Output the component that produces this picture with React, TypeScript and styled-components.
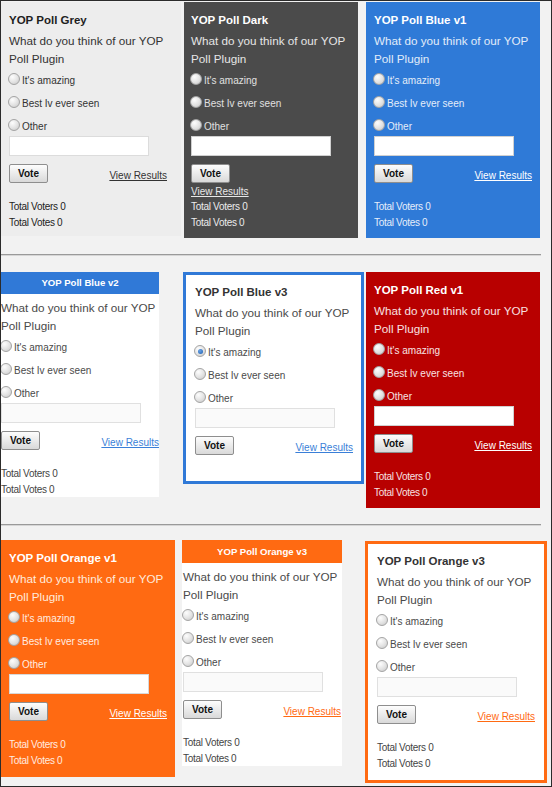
import styled, { createGlobalStyle } from 'styled-components';

const GlobalStyle = createGlobalStyle`
  html, body {
    margin: 0;
    padding: 0;
  }
  body {
    font-family: 'Liberation Sans', Arial, sans-serif;
    background: #f2f2f2;
  }
`;

type Skin = {
  bg: string;
  accent: string;
  title: string;
  text: string;
  label: string;
  link: string;
  totals: string;
  inputBg: string;
  inputBorder: string;
};

type Mode = 'inline' | 'header' | 'boxed';

type PollProps = {
  name: string;
  skin: Skin;
  mode: Mode;
  width: number;
  height: number;
  offset: number;
  top?: number;
  padX: number;
  headerHeight?: number;
  linkBelow?: boolean;
  showTotals?: boolean;
  checked?: number;
};

const options = ["It's amazing", 'Best Iv ever seen', 'Other'];

const grey: Skin = {
  bg: '#ededed',
  accent: '#ededed',
  title: '#1e1e1e',
  text: '#333',
  label: '#333',
  link: '#333',
  totals: '#222',
  inputBg: '#fff',
  inputBorder: '#dcdcdc',
};

const dark: Skin = {
  bg: '#4b4b4b',
  accent: '#4b4b4b',
  title: '#fff',
  text: '#e6e6e6',
  label: '#e0e0e0',
  link: '#e8e8e8',
  totals: '#ececec',
  inputBg: '#fff',
  inputBorder: '#cfcfcf',
};

const blue: Skin = {
  bg: '#2f7ad7',
  accent: '#2f7ad7',
  title: '#fff',
  text: '#e1ecf9',
  label: '#e4edf9',
  link: '#fff',
  totals: '#e6eefa',
  inputBg: '#fff',
  inputBorder: '#d0d0d0',
};

const red: Skin = {
  bg: '#b80000',
  accent: '#b80000',
  title: '#fff',
  text: '#f7e0e0',
  label: '#f7e3e3',
  link: '#fff',
  totals: '#f7e3e3',
  inputBg: '#fff',
  inputBorder: '#d0d0d0',
};

const orange: Skin = {
  bg: '#ff6a12',
  accent: '#ff6a12',
  title: '#fff',
  text: '#ffeadc',
  label: '#ffece0',
  link: '#fff',
  totals: '#ffece0',
  inputBg: '#fff',
  inputBorder: '#d8d8d8',
};

const lightBlue: Skin = {
  bg: '#fff',
  accent: '#3079d7',
  title: '#333',
  text: '#4a4a4a',
  label: '#4a4a4a',
  link: '#3a7fd8',
  totals: '#444',
  inputBg: '#fafafa',
  inputBorder: '#e0e0e0',
};

const lightOrange: Skin = {
  ...lightBlue,
  accent: '#ff6a12',
  link: '#ff6a12',
};

export default function App() {
  return (
    <>
      <GlobalStyle />
      <Frame>
        <Row $height={253} $padTop={1}>
          <Poll name="YOP Poll Grey" skin={grey} mode="inline" width={180} height={234} offset={0} padX={8} />
          <Poll name="YOP Poll Dark" skin={dark} mode="inline" width={174} height={236} offset={3} padX={7} linkBelow />
          <Poll name="YOP Poll Blue v1" skin={blue} mode="inline" width={174} height={236} offset={8} padX={8} />
        </Row>
        <Separator />
        <Row $height={268} $padTop={16}>
          <Poll name="YOP Poll Blue v2" skin={lightBlue} mode="header" width={158} height={225} offset={0} padX={0} headerHeight={22} />
          <Poll name="YOP Poll Blue v3" skin={lightBlue} mode="boxed" width={181} height={212} offset={24} padX={9} showTotals={false} checked={0} />
          <Poll name="YOP Poll Red v1" skin={red} mode="inline" width={174} height={236} offset={2} padX={8} />
        </Row>
        <Separator />
        <Row $height={259} $padTop={14}>
          <Poll name="YOP Poll Orange v1" skin={orange} mode="inline" width={174} height={237} offset={0} padX={8} />
          <Poll name="YOP Poll Orange v3" skin={lightOrange} mode="header" width={160} height={226} offset={7} padX={1} headerHeight={23} />
          <Poll name="YOP Poll Orange v3" skin={lightOrange} mode="boxed" width={182} height={242} offset={23} top={1} padX={9} />
        </Row>
      </Frame>
    </>
  );
}

function Poll({
  name,
  skin,
  mode,
  width,
  height,
  offset,
  top = 0,
  padX,
  headerHeight = 22,
  linkBelow = false,
  showTotals = true,
  checked,
}: PollProps) {
  return (
    <Panel
      $w={width}
      $h={height}
      $x={offset}
      $y={top}
      $padX={padX}
      $mode={mode}
      $skin={skin}
    >
      {mode === 'header' ? (
        <HeaderBar $skin={skin} $padX={padX} $h={headerHeight}>
          {name}
        </HeaderBar>
      ) : (
        <Title $color={skin.title}>{name}</Title>
      )}

      <Question $color={skin.text}>What do you think of our YOP Poll Plugin</Question>

      <Options>
        {options.map((label, i) => (
          <Option key={label} $color={skin.label}>
            <Radio $checked={checked === i} />
            {label}
          </Option>
        ))}
      </Options>

      <OtherInput $bg={skin.inputBg} $border={skin.inputBorder} />

      <Footer $stacked={linkBelow}>
        <VoteButton>Vote</VoteButton>
        <ResultsLink $color={skin.link}>View Results</ResultsLink>
      </Footer>

      {showTotals && (
        <Totals $color={skin.totals} $gap={linkBelow ? 0 : 16}>
          <div>Total Voters 0</div>
          <div>Total Votes 0</div>
        </Totals>
      )}
    </Panel>
  );
}

const Frame = styled.div`
  width: 552px;
  height: 787px;
  box-sizing: border-box;
  border: 1px solid #2b2b2b;
  background: #f2f2f2;
  overflow: hidden;
`;

const Row = styled.div<{ $height: number; $padTop: number }>`
  display: flex;
  align-items: flex-start;
  height: ${(p) => p.$height}px;
  padding-top: ${(p) => p.$padTop}px;
  box-sizing: border-box;
`;

const Separator = styled.div`
  width: 540px;
  height: 2px;
  box-sizing: border-box;
  border-top: 1px solid #9a9a9a;
  border-bottom: 1px solid #d6d6d6;
`;

const Panel = styled.section<{
  $w: number;
  $h: number;
  $x: number;
  $y: number;
  $padX: number;
  $mode: Mode;
  $skin: Skin;
}>`
  flex: none;
  box-sizing: border-box;
  width: ${(p) => p.$w}px;
  height: ${(p) => p.$h}px;
  margin-left: ${(p) => p.$x}px;
  margin-top: ${(p) => p.$y}px;
  padding: ${(p) => (p.$mode === 'header' ? 0 : p.$mode === 'boxed' ? 9 : 10)}px
    ${(p) => p.$padX}px 0;
  background: ${(p) => p.$skin.bg};
  border: ${(p) => (p.$mode === 'boxed' ? `3px solid ${p.$skin.accent}` : 'none')};
  overflow: hidden;
`;

const Title = styled.h3<{ $color: string }>`
  margin: 0 0 4px;
  font-size: 11.5px;
  font-weight: 700;
  line-height: 16px;
  color: ${(p) => p.$color};
`;

const HeaderBar = styled.div<{ $skin: Skin; $padX: number; $h: number }>`
  margin: 0 -${(p) => p.$padX}px 5px;
  height: ${(p) => p.$h}px;
  line-height: ${(p) => p.$h}px;
  background: ${(p) => p.$skin.accent};
  color: #fff;
  text-align: center;
  font-size: 9.6px;
  font-weight: 700;
`;

const Question = styled.p<{ $color: string }>`
  margin: 0;
  font-size: 11.7px;
  line-height: 18px;
  color: ${(p) => p.$color};
`;

const Options = styled.div`
  margin-top: 4px;
  display: flex;
  flex-direction: column;
  gap: 7px;
`;

const Option = styled.label<{ $color: string }>`
  display: flex;
  align-items: center;
  height: 16px;
  font-size: 10px;
  color: ${(p) => p.$color};
  white-space: nowrap;
`;

const Radio = styled.span<{ $checked: boolean }>`
  flex: none;
  position: relative;
  width: 12px;
  height: 12px;
  margin: -2px 2px 0 -1px;
  box-sizing: border-box;
  border-radius: 50%;
  border: 1px solid #a4a4a4;
  background: radial-gradient(circle at 35% 30%, #fdfdfd 0%, #e2e2e2 55%, #c4c4c4 100%);

  &::after {
    content: '';
    display: ${(p) => (p.$checked ? 'block' : 'none')};
    position: absolute;
    left: 2.5px;
    top: 2.5px;
    width: 5px;
    height: 5px;
    border-radius: 50%;
    background: radial-gradient(circle at 40% 35%, #6aa3e6, #1d5fae);
  }
`;

const OtherInput = styled.div<{ $bg: string; $border: string }>`
  margin-top: 2px;
  width: 140px;
  height: 20px;
  box-sizing: border-box;
  background: ${(p) => p.$bg};
  border: 1px solid ${(p) => p.$border};
`;

const Footer = styled.div<{ $stacked: boolean }>`
  margin-top: 8px;
  width: 158px;
  display: flex;
  flex-direction: ${(p) => (p.$stacked ? 'column' : 'row')};
  justify-content: space-between;
  align-items: ${(p) => (p.$stacked ? 'flex-start' : 'flex-end')};
  gap: ${(p) => (p.$stacked ? 2 : 0)}px;
`;

const VoteButton = styled.button`
  width: 39px;
  height: 19px;
  padding: 0;
  box-sizing: border-box;
  border: 1px solid #8e8e8e;
  border-radius: 2px;
  background: linear-gradient(#fdfdfd, #d9d9d9);
  font-family: 'Liberation Sans', Arial, sans-serif;
  font-size: 10px;
  font-weight: 700;
  color: #111;
`;

const ResultsLink = styled.a<{ $color: string }>`
  font-size: 10px;
  line-height: 14px;
  color: ${(p) => p.$color};
  text-decoration: underline;
  cursor: pointer;
`;

const Totals = styled.div<{ $color: string; $gap: number }>`
  margin-top: ${(p) => p.$gap}px;
  font-size: 10px;
  line-height: 16px;
  letter-spacing: -0.3px;
  color: ${(p) => p.$color};
`;
